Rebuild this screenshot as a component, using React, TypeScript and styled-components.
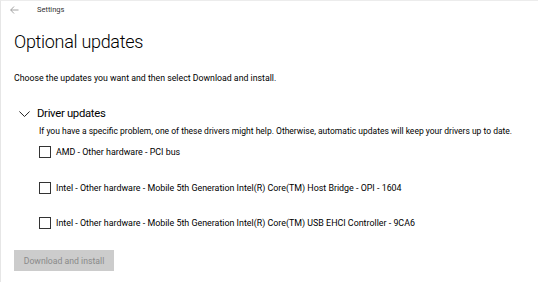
import { createGlobalStyle, styled } from 'styled-components';

const GlobalStyle = createGlobalStyle`
  html, body {
    margin: 0;
    padding: 0;
    background: #fff;
  }
  body {
    font-family: Roboto, Lato, sans-serif;
    color: #000;
  }
`;

const Window = styled.div`
  width: 538px;
  height: 282px;
  box-sizing: border-box;
  border-left: 1px solid #e6e6e6;
  border-top: 1px solid #ececec;
  background: #fff;
  overflow: hidden;
`;

const TitleBar = styled.div`
  display: flex;
  align-items: center;
  height: 17px;
  padding-left: 9px;
  font-size: 7.5px;
  color: #333;
`;

const BackButton = styled.div`
  display: flex;
  align-items: center;
  width: 27px;
`;

const Content = styled.div`
  padding: 0 0 0 13px;
`;

const Title = styled.h1`
  margin: 11px 0 0;
  font-size: 18px;
  font-weight: 300;
  letter-spacing: -0.3px;
  line-height: 26px;
  color: #000;
`;

const Intro = styled.p`
  margin: 16px 0 0;
  font-size: 8.75px;
  line-height: 14px;
`;

const Section = styled.section`
  margin-top: 20px;
  padding-left: 5px;
`;

const SectionHeader = styled.div`
  display: flex;
  align-items: center;
  gap: 7px;
  font-size: 11.3px;
  letter-spacing: -0.3px;
  line-height: 18px;
`;

const Description = styled.p`
  margin: 1px 0 0 20px;
  font-size: 8.5px;
  line-height: 14px;
  white-space: nowrap;
`;

const DriverList = styled.div`
  display: flex;
  flex-direction: column;
  gap: 21.5px;
  margin: 7px 0 0 20px;
`;

const DriverRow = styled.label`
  display: flex;
  align-items: center;
  gap: 5px;
  height: 14px;
  font-size: 8.9px;
`;

const Box = styled.span`
  width: 10px;
  height: 10px;
  border: 1.5px solid #333;
  flex: none;
`;

const DownloadButton = styled.button`
  margin-top: 20px;
  width: 100px;
  height: 21px;
  border: none;
  background: #cccccc;
  color: #8a8a8a;
  font-family: inherit;
  font-size: 8.7px;
  padding: 0;
`;

const drivers = [
  'AMD - Other hardware - PCI bus',
  'Intel - Other hardware - Mobile 5th Generation Intel(R) Core(TM) Host Bridge - OPI - 1604',
  'Intel - Other hardware - Mobile 5th Generation Intel(R) Core(TM) USB EHCI Controller - 9CA6',
];

const App = () => {
  return (
    <>
      <GlobalStyle />
      <Window>
        <TitleBar>
          <BackButton>
            <svg width="9" height="8" viewBox="0 0 9 8">
              <path d="M4 0.5 L0.7 4 L4 7.5 M0.7 4 H8.5" fill="none" stroke="#999" strokeWidth="0.9" />
            </svg>
          </BackButton>
          Settings
        </TitleBar>
        <Content>
          <Title>Optional updates</Title>
          <Intro>Choose the updates you want and then select Download and install.</Intro>
          <Section>
            <SectionHeader>
              <svg width="11" height="6" viewBox="0 0 11 6">
                <path d="M0.4 0.5 L5.5 5.5 L10.6 0.5" fill="none" stroke="#222" strokeWidth="1" />
              </svg>
              Driver updates
            </SectionHeader>
            <Description>
              If you have a specific problem, one of these drivers might help. Otherwise, automatic updates will keep your drivers up to date.
            </Description>
            <DriverList>
              {drivers.map((d) => (
                <DriverRow key={d}>
                  <Box />
                  {d}
                </DriverRow>
              ))}
            </DriverList>
          </Section>
          <DownloadButton disabled>Download and install</DownloadButton>
        </Content>
      </Window>
    </>
  );
};

export default App;
